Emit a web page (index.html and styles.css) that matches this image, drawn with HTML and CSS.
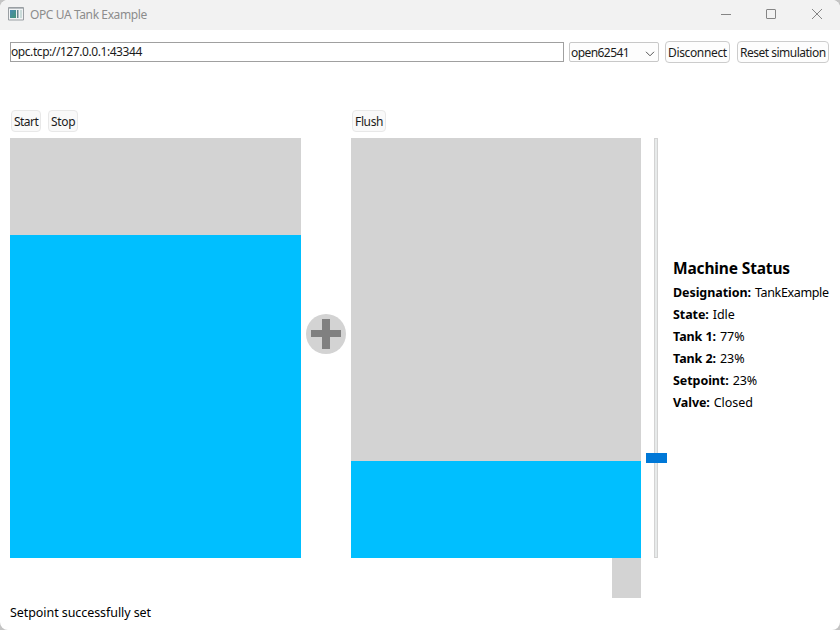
FILE: index.html
```html
<!DOCTYPE html>
<html lang="en">
<head>
<meta charset="utf-8">
<title>OPC UA Tank Example</title>
<link rel="stylesheet" href="styles.css">
</head>
<body>
<div class="window">
  <header class="titlebar">
    <svg class="app-icon" width="16" height="14" viewBox="0 0 16 14">
      <defs><linearGradient id="g" x2="1" y2="1"><stop stop-color="#4a8bb3"/><stop offset="1" stop-color="#459576"/></linearGradient></defs>
      <path fill="#f1f3f4" stroke="#9a9fa3" d="M.5.5h15v12.500H.5z"/>
      <path fill="#b8bdc1" d="M1 1h14v1H1z"/>
      <path fill="url(#g)" d="M2 3h6v8H2z"/>
      <path fill="#68868d" d="M9 3h1.500v8H9z"/>
      <path fill="#cadbd9" d="M12 3h2v8h-2z"/>
    </svg>
    <span class="caption">OPC UA Tank Example</span>
    <svg class="controls" width="102" height="12" viewBox="0 0 102 12" fill="none" stroke="#858585">
      <path d="M0 6.5h10"/>
      <rect x="45.5" y="1.5" width="9" height="9" rx=".5"/>
      <path d="M91 1l10 10M101 1L91 11"/>
    </svg>
  </header>
  <div class="toolbar">
    <div class="field"><span>opc.tcp://127.0.0.1:43344</span></div>
    <div class="combo"><span>open62541</span>
      <svg width="10" height="6" viewBox="0 0 10 6" fill="none" stroke="#555"><path d="M1 .8l4 4 4-4"/></svg>
    </div>
    <button class="btn disconnect">Disconnect</button>
    <button class="btn reset">Reset simulation</button>
  </div>
  <main class="plant">
    <section class="column">
      <div class="actions"><button class="btn soft start">Start</button><button class="btn soft stop">Stop</button></div>
      <div class="tank"><div class="liquid first"></div></div>
    </section>
    <svg class="valve" width="40" height="40" viewBox="0 0 40 40"><circle cx="20" cy="20" r="20" fill="#d3d3d3"/><path fill="#808080" d="M16 5h8v11h11v7H24v12h-8V23H5v-7h11z"/></svg>
    <section class="column second">
      <div class="actions"><button class="btn soft flush">Flush</button></div>
      <div class="tank"><div class="liquid second-fill"></div></div>
      <div class="outlet"></div>
    </section>
    <div class="slider"><div class="groove"></div><div class="handle"></div></div>
    <section class="status">
      <h1>Machine Status</h1>
      <p><b>Designation:</b><span class="name">TankExample</span></p>
      <p><b>State:</b><span>Idle</span></p>
      <p><b>Tank 1:</b><span>77%</span></p>
      <p><b>Tank 2:</b><span>23%</span></p>
      <p><b>Setpoint:</b><span>23%</span></p>
      <p><b>Valve:</b><span>Closed</span></p>
    </section>
  </main>
  <footer class="message">Setpoint successfully set</footer>
</div>
</body>
</html>
```
FILE: styles.css
```css
* { box-sizing: border-box; }
html { background: #c4c4c4; }
body { margin: 0; font: 12px/20px "Noto Sans", "Open Sans", sans-serif; color: #1b1b1b; }
.window { width: 840px; height: 630px; background: #fff; border-radius: 8px; overflow: hidden; display: flex; flex-direction: column; }
.titlebar { flex: 0 0 30px; background: #f2f2f2; display: flex; align-items: center; padding: 0 17px 0 8px; }
.app-icon { margin-top: -2px; }
.caption { margin-left: 6px; color: #8c8c8c; letter-spacing: -.4px; white-space: nowrap; }
.controls { margin-left: auto; margin-top: -2px; }
.toolbar { height: 33px; padding: 11px 11px 0 10px; display: flex; }
.field { width: 554px; height: 20px; margin: 1px 5px 0 0; border: 1px solid #a0a0a0; line-height: 18px; white-space: nowrap; letter-spacing: -.43px; }
.combo { width: 90px; height: 20px; margin: 1px 6px 0 0; border: 1px solid #c8c8c8; border-radius: 2px; background: #fdfdfd; display: flex; align-items: center; justify-content: space-between; padding: 1px 3px 0 1px; letter-spacing: -.57px; }
.combo svg { margin-top: 3px; }
.btn { height: 22px; padding: 1px 0 0 2px; border: 1px solid #ccc; border-radius: 4px; background: #fdfdfd; color: #1b1b1b; font: inherit; line-height: 19px; text-align: left; white-space: nowrap; letter-spacing: -.35px; }
.disconnect { width: 65px; margin-right: 7px; }
.reset { width: 92px; letter-spacing: -.5px; }
.soft { background: #f9f9f9; border-color: #e8e8e8; }
.start, .stop { width: 30px; margin-right: 7px; }
.start { letter-spacing: -.55px; }
.flush { width: 34px; }
.plant { height: 535px; padding: 47px 0 0 10px; display: flex; align-items: flex-start; }
.column { width: 291px; }
.column.second { width: 290px; }
.actions { height: 28px; padding-left: 1px; display: flex; }
.tank { height: 420px; background: #d3d3d3; display: flex; flex-direction: column; justify-content: flex-end; }
.liquid { background: #00bfff; }
.first { height: 323px; }
.second-fill { height: 97px; }
.valve { margin: 204px 5px 0; }
.outlet { width: 29px; height: 40px; margin-left: auto; background: #d3d3d3; }
.slider { position: relative; width: 21px; margin: 28px 6px 0 5px; }
.groove { width: 4px; height: 420px; margin-left: 8px; border: 1px solid #d3d3d3; background: #e7eaea; }
.handle { position: absolute; left: 0; top: 315px; width: 21px; height: 10px; background: #0078d7; }
.status { margin-top: 148px; color: #000; white-space: nowrap; }
.status h1 { font-size: 15.5px; line-height: 21px; margin: 0 0 3px; letter-spacing: -.15px; }
.status p { margin: 0; height: 22px; font-size: 12.5px; line-height: 21px; display: flex; gap: 4px; letter-spacing: -.07px; }
.status .name { letter-spacing: -.35px; }
.message { padding: 5px 10px; font-size: 12.5px; line-height: 20px; letter-spacing: -.07px; color: #000; }
```
